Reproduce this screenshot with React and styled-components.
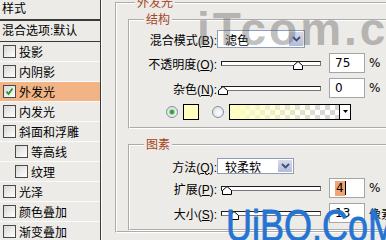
import React from "react";
import styled, { createGlobalStyle } from "styled-components";

const GlobalStyle = createGlobalStyle`
  html, body {
    margin: 0;
    padding: 0;
    background: #ecebe8;
  }
  body {
    font-family: "Liberation Sans", "Noto Sans CJK SC", sans-serif;
    font-size: 12px;
    color: #000;
  }
`;

const Window = styled.div`
  position: relative;
  width: 386px;
  height: 240px;
  overflow: hidden;
  display: flex;
  background: #ecebe8;
`;

// left: layer style list
const StyleList = styled.div`
  width: 100px;
  flex-shrink: 0;
  display: flex;
  flex-direction: column;
  border-right: 1px solid #3a3a3a;
  box-shadow: 1px 0 0 #fff;
`;

const ListHeader = styled.div`
  height: 19px;
  line-height: 19px;
  padding-left: 2px;
  border-bottom: 2px solid #3a3a3a;
  flex-shrink: 0;
`;

const BlendRow = styled.div`
  height: 20px;
  line-height: 20px;
  padding-left: 2px;
  border-bottom: 1px solid #3a3a3a;
  flex-shrink: 0;
`;

const StyleItem = styled.div`
  height: 19px;
  flex-shrink: 0;
  display: flex;
  align-items: center;
  gap: 3px;
  padding-left: ${(p) => (p.$indent ? 15 : 3)}px;
  border-bottom: 1px solid #fbfbfa;
  background: ${(p) => (p.$active ? "#f2b484" : "transparent")};
`;

const CheckBox = styled.span`
  width: 11px;
  height: 11px;
  flex-shrink: 0;
  border: 1px solid #4a4a4a;
  background: linear-gradient(135deg, #d8d8d6, #fff);
  display: flex;
  align-items: center;
  justify-content: center;
`;

// right: options
const Options = styled.div`
  flex: 1;
  padding-left: 14px;
  display: flex;
  flex-direction: column;
`;

const Group = styled.fieldset`
  margin: ${(p) => p.$mt}px 0 0 0;
  padding: 0 0 ${(p) => p.$pb}px ${(p) => p.$pl}px;
  border: 2px groove #fff;
  width: ${(p) => p.$w}px;
  flex-shrink: 0;
  min-width: 0;
  box-sizing: border-box;
`;

const Legend = styled.legend`
  margin-left: ${(p) => p.$ml}px;
  padding: 0 2px;
  line-height: 14px;
  font-size: 12px;
  color: #a4461e;
`;

const Row = styled.div`
  display: flex;
  align-items: center;
  height: ${(p) => p.$h}px;
  margin-top: ${(p) => p.$mt}px;
`;

const Label = styled.span`
  width: 87px;
  flex-shrink: 0;
  text-align: right;
  white-space: nowrap;
`;

const Select = styled.div`
  width: ${(p) => p.$w}px;
  height: ${(p) => p.$h}px;
  box-sizing: border-box;
  border: 1px solid #8d9cb8;
  background: #fff;
  display: flex;
  align-items: center;
  justify-content: space-between;
  padding-left: 7px;
`;

const SelectButton = styled.span`
  width: 16px;
  height: 100%;
  box-sizing: border-box;
  border: 1px solid #fff;
  background: linear-gradient(#d6dbec, #b3bcd6);
  display: flex;
  align-items: center;
  justify-content: center;
`;

const Track = styled.div`
  position: relative;
  margin-left: 4px;
  width: 100px;
  height: 5px;
  box-sizing: border-box;
  border: 1px solid #1e1e1e;
  border-right-color: #777;
  border-bottom-color: #777;
  background: #fff;
`;

const Thumb = styled.svg`
  position: absolute;
  top: -1px;
  width: 10px;
  height: 9px;
`;

const NumberBox = styled.div`
  margin-left: 8px;
  width: 36px;
  height: 20px;
  box-sizing: border-box;
  border: 1px solid #a5a5a5;
  background: #fff;
  display: flex;
  align-items: center;
  padding-left: 5px;
  font-family: "DejaVu Sans", sans-serif;
  font-size: 12px;
`;

const Selected = styled.span`
  background: #f0a573;
  line-height: 15px;
  padding: 0 1px;
`;

const Caret = styled.span`
  width: 1px;
  height: 14px;
  background: #000;
`;

const Unit = styled.span`
  margin-left: 4px;
  font-family: "DejaVu Sans", "Noto Sans CJK SC", sans-serif;
  font-size: 12px;
  white-space: nowrap;
`;

const Radio = styled.span`
  margin-left: ${(p) => p.$ml}px;
  width: 10px;
  height: 10px;
  flex-shrink: 0;
  border-radius: 50%;
  border: 1px solid #7f8fa6;
  background: radial-gradient(circle at 60% 60%, #fff, #d5d8dc);
  display: flex;
  align-items: center;
  justify-content: center;
  &::after {
    content: "";
    display: ${(p) => (p.$on ? "block" : "none")};
    width: 4px;
    height: 4px;
    border-radius: 50%;
    background: #2f9e34;
    box-shadow: 0 0 1px 1px #8fd08a;
  }
`;

const Swatch = styled.span`
  margin-left: 5px;
  width: 16px;
  height: 16px;
  box-sizing: border-box;
  border: 1px solid #000;
  background: #ffffc0;
`;

const GradientBar = styled.span`
  margin-left: 5px;
  width: 111px;
  height: 16px;
  box-sizing: border-box;
  border: 1px solid #000;
  background-image: linear-gradient(to right, #ffffc0 0%, rgba(255, 255, 192, 0.6) 35%, rgba(255, 255, 192, 0) 90%),
    conic-gradient(#d6d6d6 25%, #fff 0 50%, #d6d6d6 0 75%, #fff 0);
  background-size: 100% 100%, 10px 10px;
`;

const GradientArrow = styled.span`
  width: 11px;
  height: 16px;
  box-sizing: border-box;
  border: 1px solid #000;
  border-left: none;
  background: #fff;
  display: flex;
  justify-content: center;
  padding-top: 5px;
`;

const WatermarkTop = styled.div`
  position: absolute;
  left: 197px;
  top: 6px;
  font-family: "Liberation Sans", sans-serif;
  font-weight: bold;
  font-size: 46px;
  line-height: 46px;
  letter-spacing: 3px;
  color: rgba(90, 90, 90, 0.4);
  white-space: nowrap;
  pointer-events: none;
`;

const WatermarkBottom = styled.div`
  position: absolute;
  left: 226px;
  top: 203px;
  font-family: "Liberation Sans", sans-serif;
  font-size: 45px;
  line-height: 45px;
  color: #2474d2;
  -webkit-text-stroke: 0.8px #2474d2;
  transform: scaleX(0.8);
  transform-origin: left top;
  white-space: nowrap;
  pointer-events: none;
`;

const styleItems = [
  { label: "投影" },
  { label: "内阴影" },
  { label: "外发光", checked: true },
  { label: "内发光" },
  { label: "斜面和浮雕" },
  { label: "等高线", indent: true },
  { label: "纹理", indent: true },
  { label: "光泽" },
  { label: "颜色叠加" },
  { label: "渐变叠加" },
];

const Chevron = () => (
  <svg width="9" height="6" viewBox="0 0 9 6">
    <path d="M1 1 L4.5 4.5 L8 1" fill="none" stroke="#3f4d78" strokeWidth="1.8" />
  </svg>
);

const Slider = ({ pos }) => (
  <Track>
    <Thumb viewBox="0 0 10 9" style={{ left: pos - 5 }}>
      <polygon points="5,0.5 9.5,4.5 9.5,8.5 0.5,8.5 0.5,4.5" fill="#fff" stroke="#000" strokeWidth="1" />
    </Thumb>
  </Track>
);

const Opt = ({ children, k }) => (
  <Label>
    {children}(<u>{k}</u>):
  </Label>
);

export default function App() {
  return (
    <>
      <GlobalStyle />
      <Window>
        <StyleList>
          <ListHeader>样式</ListHeader>
          <BlendRow>混合选项:默认</BlendRow>
          {styleItems.map((it) => (
            <StyleItem key={it.label} $indent={it.indent} $active={it.checked}>
              <CheckBox>
                {it.checked && (
                  <svg width="9" height="9" viewBox="0 0 9 9">
                    <polyline points="1.5,4.5 3.5,7 7.5,1.5" fill="none" stroke="#1f9a2a" strokeWidth="1.8" />
                  </svg>
                )}
              </CheckBox>
              {it.label}
            </StyleItem>
          ))}
        </StyleList>

        <Options>
          <Group $mt={-4} $pb={0} $pl={11} $w={330}>
            <Legend $ml={7}>外发光</Legend>

            <Group $mt={3} $pb={6} $pl={0} $w={300}>
              <Legend $ml={14}>结构</Legend>
              <Row $h={18} $mt={3}>
                <Opt k="B">混合模式</Opt>
                <Select $w={88} $h={18}>
                  滤色
                  <SelectButton>
                    <Chevron />
                  </SelectButton>
                </Select>
              </Row>
              <Row $h={20} $mt={5}>
                <Opt k="O">不透明度</Opt>
                <Slider pos={76} />
                <NumberBox>75</NumberBox>
                <Unit>%</Unit>
              </Row>
              <Row $h={20} $mt={5}>
                <Opt k="N">杂色</Opt>
                <Slider pos={1} />
                <NumberBox>0</NumberBox>
                <Unit>%</Unit>
              </Row>
              <Row $h={18} $mt={5}>
                <Radio $ml={36} $on />
                <Swatch />
                <Radio $ml={13} />
                <GradientBar />
                <GradientArrow>
                  <svg width="5" height="3" viewBox="0 0 5 3">
                    <polygon points="0,0 5,0 2.5,3" fill="#000" />
                  </svg>
                </GradientArrow>
              </Row>
            </Group>

            <Group $mt={9} $pb={6} $pl={0} $w={300}>
              <Legend $ml={14}>图素</Legend>
              <Row $h={16} $mt={6}>
                <Opt k="Q">方法</Opt>
                <Select $w={77} $h={16}>
                  较柔软
                  <SelectButton>
                    <Chevron />
                  </SelectButton>
                </Select>
              </Row>
              <Row $h={20} $mt={4}>
                <Opt k="P">扩展</Opt>
                <Slider pos={5} />
                <NumberBox>
                  <Selected>4</Selected>
                  <Caret />
                </NumberBox>
                <Unit>%</Unit>
              </Row>
              <Row $h={20} $mt={5}>
                <Opt k="S">大小</Opt>
                <Slider pos={12} />
                <NumberBox>13</NumberBox>
                <Unit>像素</Unit>
              </Row>
            </Group>
          </Group>
        </Options>

        <WatermarkTop>iTcom.cn</WatermarkTop>
        <WatermarkBottom>UiBQ.CoM</WatermarkBottom>
      </Window>
    </>
  );
}
